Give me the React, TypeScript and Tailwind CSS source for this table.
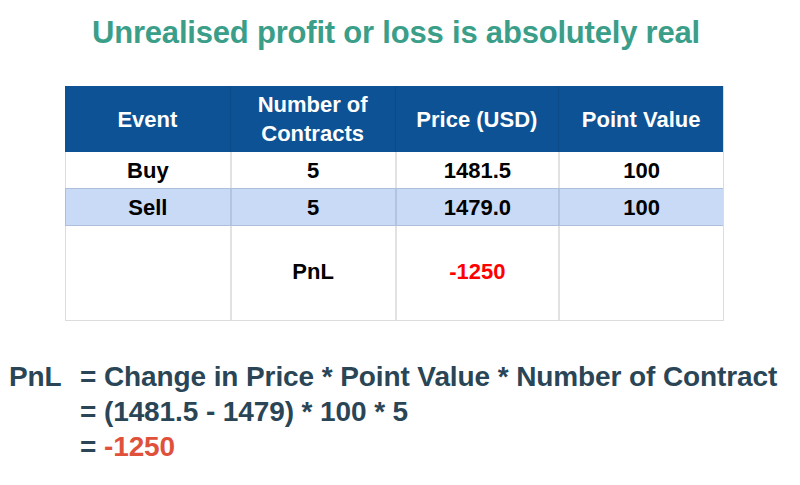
import React from "react";

const font = { fontFamily: '"Liberation Sans", Arial, sans-serif' };

export default function App() {
  const cols = ["w-[165px]", "w-[165px]", "w-[164px]", "w-[165px]"];
  const rows = [
    { cells: ["Buy", "5", "1481.5", "100"], bg: "bg-white", h: "h-[36px]" },
    { cells: ["Sell", "5", "1479.0", "100"], bg: "bg-[#c9daf6]", h: "h-[38px]" },
  ];
  return (
    <div className="w-[800px] h-[485px] bg-white flex flex-col" style={font}>
      <div className="h-[86px] flex justify-center pt-[14px] pr-[8px]">
        <h1 className="text-[31px] font-bold text-[#3a9e89] leading-[38px] tracking-[-0.2px]">
          Unrealised profit or loss is absolutely real
        </h1>
      </div>
      <div className="ml-[65px] w-[659px] flex flex-col border-r border-b border-[#dcdcdc]">
        <div className="flex h-[66px] bg-[#0d5294]">
          {["Event", "Number of\nContracts", "Price (USD)", "Point Value"].map((t, i) => (
            <div
              key={i}
              className={`${cols[i]} flex items-center justify-center text-center text-white font-bold text-[22px] leading-[29px] whitespace-pre-line ${i > 0 ? "border-l border-[#0b4a87]" : ""}`}
            >
              {t}
            </div>
          ))}
        </div>
        {rows.map((r, ri) => (
          <div
            key={ri}
            className={`flex ${r.h} ${r.bg} ${ri === 1 ? "border-y border-[#aebfdc]" : ""}`}
          >
            {r.cells.map((c, i) => (
              <div
                key={i}
                className={`${cols[i]} flex items-center justify-center text-black font-bold text-[22px] ${
                  i > 0 ? (ri === 1 ? "border-l-2 border-[#b4c4df]" : "border-l-2 border-[#e2e2e2]") : ri === 1 ? "border-l border-[#aebfdc]" : "border-l border-[#dcdcdc]"
                }`}
              >
                {c}
              </div>
            ))}
          </div>
        ))}
        <div className="flex h-[94px] bg-white">
          {["", "PnL", "-1250", ""].map((c, i) => (
            <div
              key={i}
              className={`${cols[i]} flex items-center justify-center font-bold text-[22px] pb-[3px] ${
                i === 2 ? "text-[#ff0000]" : "text-black"
              } ${i > 0 ? "border-l-2 border-[#e2e2e2]" : "border-l border-[#dcdcdc]"}`}
            >
              {c}
            </div>
          ))}
        </div>
      </div>
      <div className="mt-[38px] flex text-[#2a4656] font-bold text-[28px] leading-[35px] tracking-[-0.1px]">
        <div className="w-[80px] pl-[9px]">PnL</div>
        <div className="flex flex-col">
          <div>= Change in Price * Point Value * Number of Contract</div>
          <div>= (1481.5 - 1479) * 100 * 5</div>
          <div>
            = <span className="text-[#e0513c]">-1250</span>
          </div>
        </div>
      </div>
    </div>
  );
}
